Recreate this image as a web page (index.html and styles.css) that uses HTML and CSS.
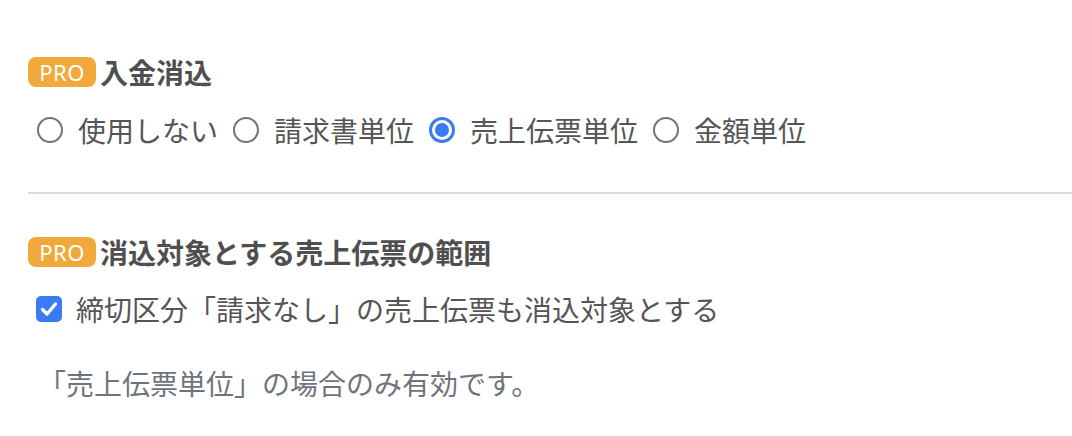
FILE: index.html
```html
<!DOCTYPE html>
<html lang="ja">
<head>
<meta charset="utf-8">
<link rel="stylesheet" href="styles.css">
</head>
<body>
<div class="page">
  <section class="block first">
    <div class="heading-row">
      <span class="badge">PRO</span>
      <h2 class="heading">入金消込</h2>
    </div>
    <div class="options">
      <label class="option"><span class="radio"></span><span class="label">使用しない</span></label>
      <label class="option"><span class="radio"></span><span class="label">請求書単位</span></label>
      <label class="option"><span class="radio checked"><span class="dot"></span></span><span class="label">売上伝票単位</span></label>
      <label class="option"><span class="radio"></span><span class="label">金額単位</span></label>
    </div>
  </section>
  <hr class="divider">
  <section class="block second">
    <div class="heading-row">
      <span class="badge">PRO</span>
      <h2 class="heading">消込対象とする売上伝票の範囲</h2>
    </div>
    <label class="check-row">
      <span class="checkbox"><svg width="26" height="26" viewBox="0 0 26 26"><path d="M6.5 13.5 L11 18 L19.5 8" fill="none" stroke="#fff" stroke-width="3.4" stroke-linecap="round" stroke-linejoin="round"/></svg></span>
      <span class="label">締切区分「請求なし」の売上伝票も消込対象とする</span>
    </label>
    <p class="note">「売上伝票単位」の場合のみ有効です。</p>
  </section>
</div>
</body>
</html>
```

FILE: styles.css
```css
html, body {
  margin: 0;
  padding: 0;
  background: #ffffff;
}

.page {
  padding: 52px 0 0 28px;
  font-family: "Noto Sans CJK JP", "Noto Sans", sans-serif;
  color: #555555;
}

.heading-row {
  display: flex;
  align-items: center;
  height: 40px;
}

.badge {
  display: inline-flex;
  align-items: center;
  justify-content: center;
  width: 68px;
  height: 30px;
  border-radius: 8px;
  background: #f2a93c;
  color: #ffffff;
  font-family: "Noto Sans", "Noto Sans CJK JP", sans-serif;
  font-size: 22px;
  line-height: 1;
  letter-spacing: 0.5px;
  margin-right: 4px;
}

.heading {
  margin: 0;
  font-size: 28px;
  line-height: 40px;
  font-weight: 700;
  color: #4f4f4f;
}

.options {
  display: flex;
  align-items: center;
  height: 40px;
  margin-top: 18px;
}

.option {
  display: flex;
  align-items: center;
  margin-right: 6px;
}

.radio {
  box-sizing: border-box;
  width: 26px;
  height: 26px;
  border-radius: 50%;
  border: 2px solid #747474;
  margin: 0 15px 0 9px;
  display: flex;
  align-items: center;
  justify-content: center;
  background: #fff;
}

.radio.checked {
  border: 3px solid #3a7af5;
}

.dot {
  width: 14px;
  height: 14px;
  border-radius: 50%;
  background: #3a7af5;
}

.label {
  font-size: 28px;
  line-height: 40px;
  color: #555555;
}

.divider {
  border: 0;
  height: 2px;
  background: #d9dce0;
  margin: 42px 0 0 0;
}

.second {
  margin-top: 38px;
}

.check-row {
  display: flex;
  align-items: center;
  height: 40px;
  margin-top: 17px;
}

.checkbox {
  width: 26px;
  height: 26px;
  border-radius: 5px;
  background: #3a7af5;
  margin: 0 14px 0 8px;
  display: flex;
}

.note {
  margin: 34px 0 0 10px;
  font-size: 28px;
  line-height: 40px;
  color: #6f747c;
}
```
